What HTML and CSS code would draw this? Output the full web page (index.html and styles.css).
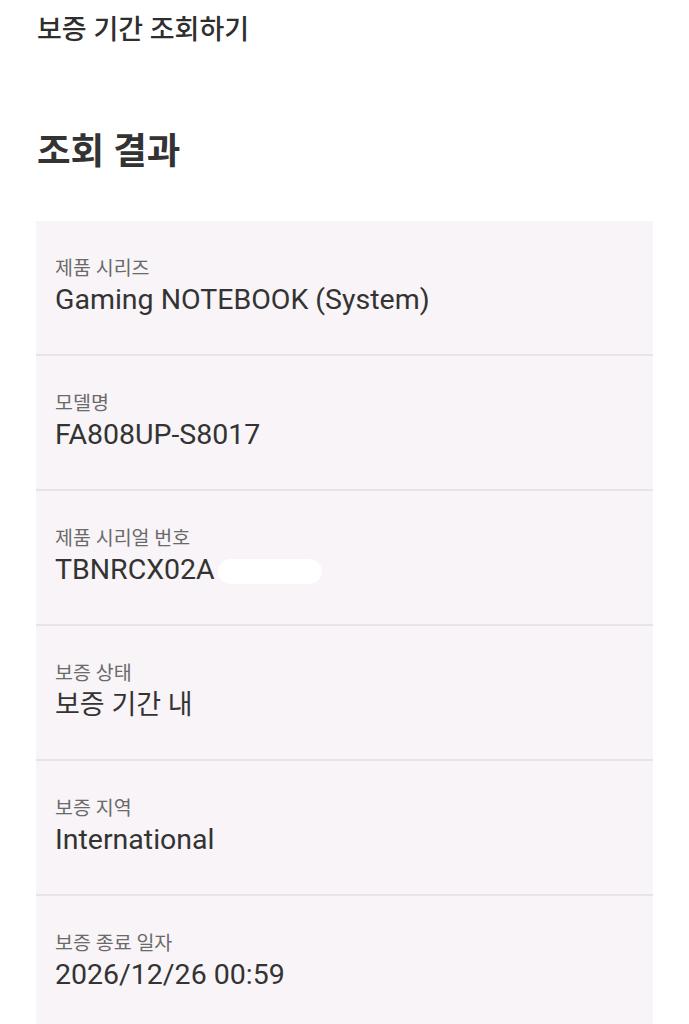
FILE: index.html
```html
<!DOCTYPE html>
<html lang="ko">
<head>
<meta charset="utf-8">
<link rel="stylesheet" href="styles.css">
</head>
<body>
<header class="appbar">보증 기간 조회하기</header>
<h1 class="heading">조회 결과</h1>
<section class="card">
  <div class="row">
    <div class="label">제품 시리즈</div>
    <div class="value">Gaming NOTEBOOK (System)</div>
  </div>
  <div class="row">
    <div class="label">모델명</div>
    <div class="value">FA808UP-S8017</div>
  </div>
  <div class="row">
    <div class="label">제품 시리얼 번호</div>
    <div class="value">TBNRCX02A<span class="mask"></span></div>
  </div>
  <div class="row">
    <div class="label">보증 상태</div>
    <div class="value value-ko">보증 기간 내</div>
  </div>
  <div class="row">
    <div class="label">보증 지역</div>
    <div class="value">International</div>
  </div>
  <div class="row">
    <div class="label">보증 종료 일자</div>
    <div class="value">2026/12/26 00:59</div>
  </div>
</section>
</body>
</html>
```
FILE: styles.css
```css
html, body {
  margin: 0;
  padding: 0;
  background: #ffffff;
}
body {
  font-family: Roboto, "Noto Sans CJK KR", sans-serif;
  color: #333333;
  height: 1024px;
  overflow: hidden;
}
.appbar {
  padding: 12px 0 0 37px;
  height: 40px;
  line-height: 36px;
  font-size: 27px;
  font-weight: 500;
  color: #2e2e2e;
}
.heading {
  margin: 78px 0 0 37px;
  font-size: 36.5px;
  line-height: 44px;
  font-weight: 700;
  color: #333333;
}
.card {
  margin: 47px 36px 0 36px;
  background: #f8f4f7;
}
.row {
  border-bottom: 2px solid #e7e3e6;
  padding: 35px 19px 0;
  display: flex;
  flex-direction: column;
  box-sizing: border-box;
  height: 135px;
}
.label {
  font-size: 19.5px;
  line-height: 26px;
  color: #6a6a6a;
}
.value {
  font-size: 28.5px;
  line-height: 36px;
  color: #333333;
  display: flex;
  align-items: center;
}
.value-ko {
  font-size: 27px;
}
.mask {
  display: inline-block;
  width: 104px;
  height: 25px;
  margin-left: 3px;
  margin-top: 2px;
  border-radius: 13px;
  background: #ffffff;
}
```
